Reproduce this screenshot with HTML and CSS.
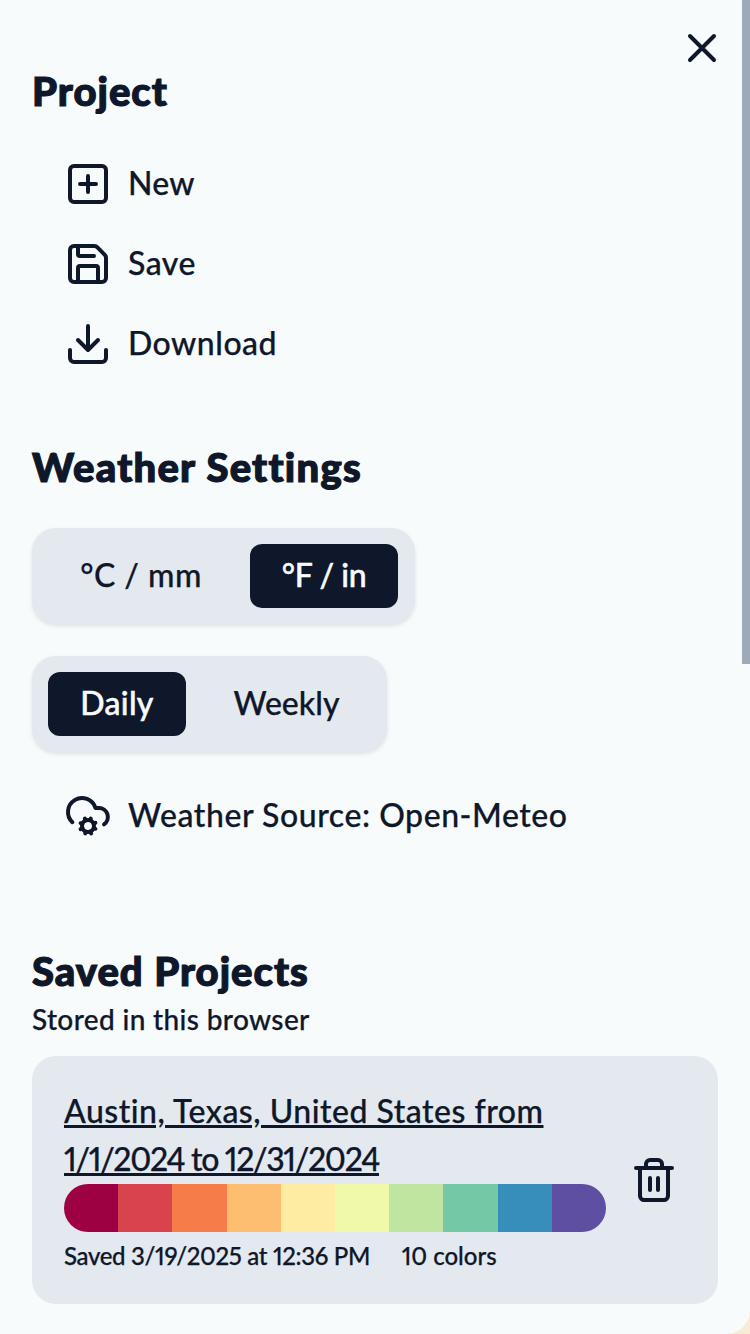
FILE: index.html
```html
<!DOCTYPE html>
<html lang="en">
<head>
<meta charset="utf-8">
<title>Project</title>
<link rel="stylesheet" href="styles.css">
</head>
<body>
<div class="panel">
  <button class="close" aria-label="Close"><svg class="icon" viewBox="0 0 24 24"><path d="M18 6 6 18M6 6l12 12"/></svg></button>
  <section class="project">
    <h2 class="h-project">Project</h2>
    <div class="menu">
      <a class="item"><svg class="icon" viewBox="0 0 24 24"><rect x="3" y="3" width="18" height="18" rx="2"/><path d="M8 12h8M12 8v8"/></svg><span class="t-new">New</span></a>
      <a class="item"><svg class="icon" viewBox="0 0 24 24"><path d="M15.2 3a2 2 0 0 1 1.4.6l3.8 3.8a2 2 0 0 1 .6 1.4V19a2 2 0 0 1-2 2H5a2 2 0 0 1-2-2V5a2 2 0 0 1 2-2z"/><path d="M17 21v-7a1 1 0 0 0-1-1H8a1 1 0 0 0-1 1v7M7 3v4a1 1 0 0 0 1 1h7"/></svg><span class="t-save">Save</span></a>
      <a class="item"><svg class="icon" viewBox="0 0 24 24"><path d="M21 15v4a2 2 0 0 1-2 2H5a2 2 0 0 1-2-2v-4M7 10l5 5 5-5M12 15V3"/></svg><span class="t-download">Download</span></a>
    </div>
  </section>
  <section class="weather">
    <h2 class="h-weather">Weather Settings</h2>
    <div class="toggle units"><button class="opt t-c">°C / mm</button><button class="opt on t-f">°F / in</button></div>
    <div class="toggle period"><button class="opt on t-daily">Daily</button><button class="opt t-weekly">Weekly</button></div>
    <a class="item source"><svg class="icon" viewBox="0 0 24 24"><circle cx="12" cy="17" r="3"/><path d="M4.2 15.1A7 7 0 1 1 15.71 8h1.79a4.5 4.5 0 0 1 2.5 8.2M15.7 18.4l-.9-.3M9.2 15.9l-.9-.3M10.6 20.7l.3-.9M13.1 14.2l.3-.9M13.6 20.7l-.4-1M10.8 14.3l-.4-1M8.3 18.6l1-.4M14.7 15.8l1-.4"/></svg><span class="t-source">Weather Source: Open-Meteo</span></a>
  </section>
  <section class="saved">
    <h2 class="h-saved">Saved Projects</h2>
    <p class="note">Stored in this browser</p>
    <article class="card">
      <div class="info">
        <a class="link"><span class="l1">Austin, Texas, United States from</span><br><span class="l2">1/1/2024 to 12/31/2024</span></a>
        <div class="palette"><i class="c0"></i><i class="c1"></i><i class="c2"></i><i class="c3"></i><i class="c4"></i><i class="c5"></i><i class="c6"></i><i class="c7"></i><i class="c8"></i><i class="c9"></i></div>
        <p class="meta"><span class="when">Saved 3/19/2025 at 12:36 PM</span><span class="count">10 colors</span></p>
      </div>
      <svg class="icon" viewBox="0 0 24 24"><path d="M3 6h18M19 6v14c0 1-1 2-2 2H7c-1 0-2-1-2-2V6M8 6V4c0-1 1-2 2-2h4c1 0 2 1 2 2v2M10 11v6M14 11v6"/></svg>
    </article>
  </section>
  <div class="scrollbar"></div>
</div>
</body>
</html>
```
FILE: styles.css
```css
* { box-sizing: border-box; margin: 0; padding: 0; }
body { background: #faebd7; color: #0f172a; font: 500 32px/48px Lato, "Open Sans", sans-serif; font-variant-ligatures: none; font-variant-numeric: proportional-nums; -webkit-text-stroke: .25px; overflow: hidden; }
.panel { position: relative; height: 1334px; padding: 64px 32px 0; background: #f7fbfc; border-radius: 0 0 24px 0; white-space: nowrap; }
.icon { display: block; flex: none; width: 48px; height: 48px; fill: none; stroke: currentColor; stroke-width: 2; stroke-linecap: round; stroke-linejoin: round; }
button { border: 0; background: none; color: inherit; font: inherit; letter-spacing: inherit; }
.close { position: absolute; top: 24px; right: 24px; }
.scrollbar { position: absolute; top: 0; right: 0; width: 8px; height: 664px; background: #9eaab9; }
h2 { height: 56px; font-size: 40px; line-height: 54px; font-weight: 900; -webkit-text-stroke: 1.2px; }
.h-project { letter-spacing: 1px; }
.h-weather { letter-spacing: 1.25px; }
.h-saved { letter-spacing: 1px; }
.menu { padding-top: 24px; }
.item { display: flex; align-items: center; gap: 16px; height: 80px; padding: 0 32px; }
.item span { padding-bottom: 2px; }
.t-new { letter-spacing: .3px; }
.t-save, .t-download { letter-spacing: .5px; }
.t-source { letter-spacing: .55px; }
.weather { padding-top: 56px; }
.toggle { display: flex; height: 96px; padding: 16px; border-radius: 24px; background: #e4e8ef; box-shadow: 0 2px 4px rgba(0,0,0,.1); }
.units { width: 383px; margin-top: 32px; }
.period { width: 355px; margin-top: 32px; }
.opt { height: 64px; padding-bottom: 2px; border-radius: 12px; text-align: center; line-height: 60px; }
.on { background: #0f172a; color: #f8fafc; -webkit-text-stroke: .5px; }
.opt.t-c { width: 186px; margin-right: 16px; letter-spacing: .5px; }
.opt.t-f { width: 148px; letter-spacing: -.4px; }
.opt.t-daily { width: 138px; letter-spacing: .3px; }
.opt.t-weekly { width: 169px; margin-left: 16px; }
.source { margin-top: 24px; }
.saved { padding-top: 88px; }
.note { height: 40px; font-size: 28px; line-height: 38px; letter-spacing: .36px; }
.card { display: flex; align-items: center; width: 686px; height: 248px; margin-top: 16px; padding: 32px 40px 32px 32px; gap: 24px; border-radius: 24px; background: #e4e8ef; }
.info { width: 542px; }
.link { display: block; height: 96px; margin-top: -1px; margin-bottom: 1px; text-decoration: underline; text-decoration-thickness: 3px; text-underline-offset: 2px; }
.l1 { letter-spacing: .5px; }
.l2 { letter-spacing: -1.35px; }
.when { letter-spacing: -.33px; margin-right: -.33px; }
.palette { display: flex; height: 48px; border-radius: 24px; overflow: hidden; }
.palette i { flex: 1; }
.c0 { background: #9e0142; } .c1 { background: #d8434e; } .c2 { background: #f67c4a; } .c3 { background: #fdbe6f; } .c4 { background: #feeda1; }
.c5 { background: #f0f8a9; } .c6 { background: #bfe5a0; } .c7 { background: #75c8a5; } .c8 { background: #378ebb; } .c9 { background: #5e4fa2; }
.meta { display: flex; gap: 32px; font-size: 24px; line-height: 32px; padding-top: 8px; height: 40px; }
```
